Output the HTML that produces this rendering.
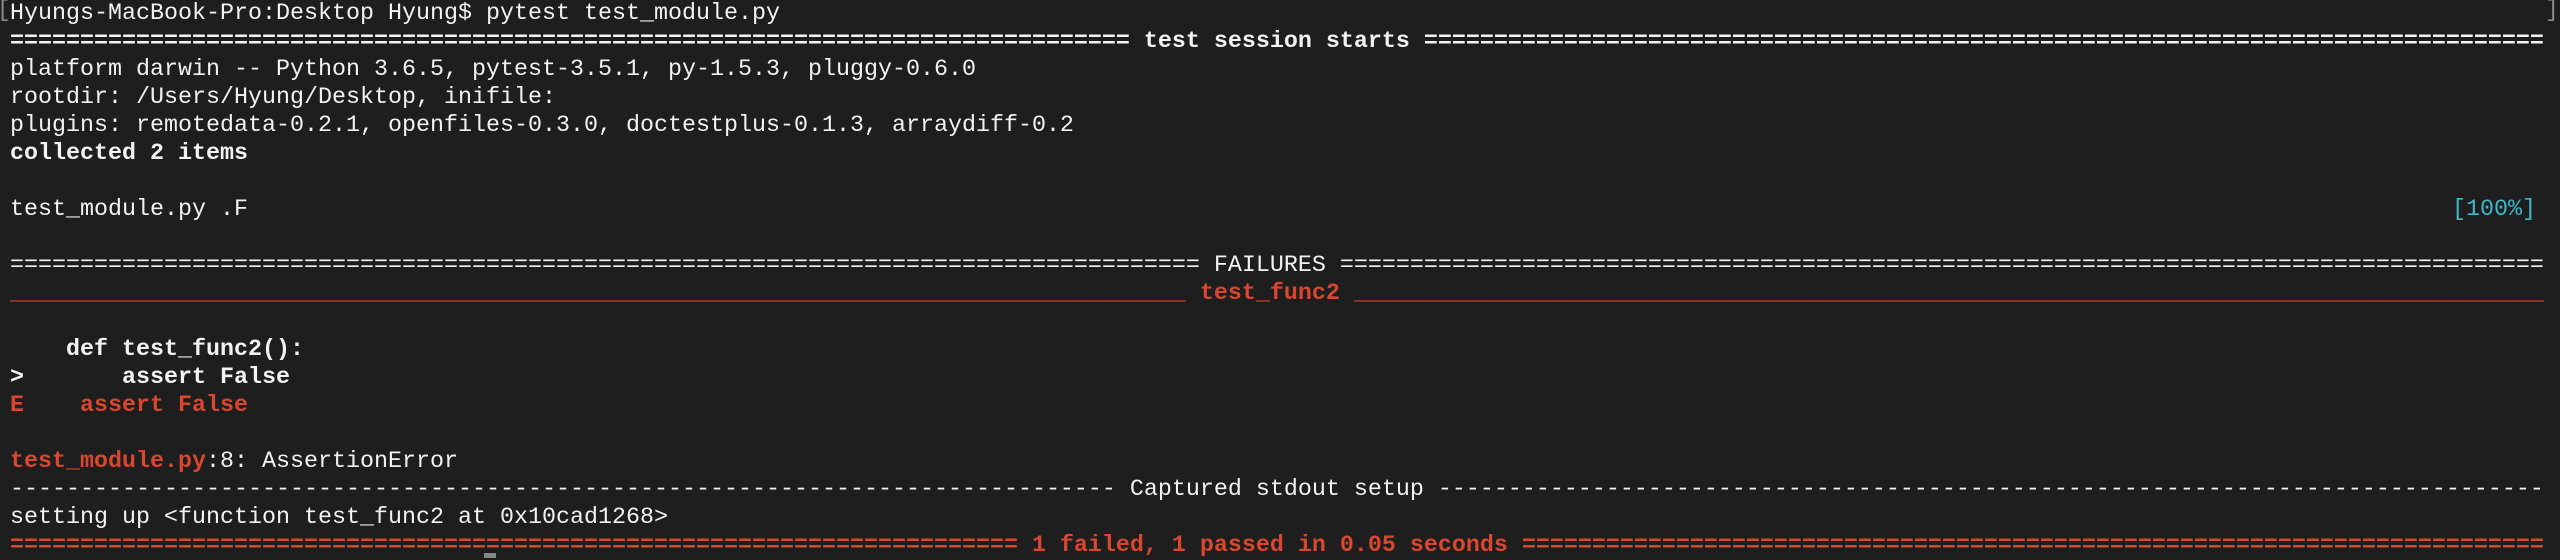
<!DOCTYPE html>
<html><head><meta charset="utf-8"><style>
html,body{margin:0;padding:0;background:#1e1e1e;width:2560px;height:558px;overflow:hidden}
.t{position:absolute;left:10px;top:0px;font-family:"Liberation Mono","DejaVu Sans Mono",monospace;font-size:23.33px;line-height:28px;color:#f2f2f2}
.t div{height:28px;white-space:pre}
b{font-weight:bold}
.r{color:#d9472f}
.c{color:#3db8c9}
.br{position:absolute;color:#8a8a8a;font-family:"Liberation Mono",monospace;font-size:23px;top:-3px}
</style></head><body>
<div class="br" style="left:-3px">[</div>
<div class="br" style="left:2545px">]</div>
<div style="position:absolute;left:484px;top:553px;width:12px;height:5px;background:#888"></div>
<div class="t"><div>Hyungs-MacBook-Pro:Desktop Hyung$ pytest test_module.py</div><div><b>================================================================================ test session starts ================================================================================</b></div><div>platform darwin -- Python 3.6.5, pytest-3.5.1, py-1.5.3, pluggy-0.6.0</div><div>rootdir: /Users/Hyung/Desktop, inifile:</div><div>plugins: remotedata-0.2.1, openfiles-0.3.0, doctestplus-0.1.3, arraydiff-0.2</div><div><b>collected 2 items</b></div><div> </div><div style="position:relative">test_module.py .F<span class="c" style="position:absolute;left:2442px;top:0">[100%]</span></div><div> </div><div>===================================================================================== FAILURES ======================================================================================</div><div class="r">____________________________________________________________________________________ <b>test_func2</b> _____________________________________________________________________________________</div><div> </div><div><b>    def test_func2():</b></div><div><b>&gt;       assert False</b></div><div class="r"><b>E    assert False</b></div><div> </div><div><b class="r">test_module.py</b>:8: AssertionError</div><div>------------------------------------------------------------------------------- Captured stdout setup -------------------------------------------------------------------------------</div><div>setting up &lt;function test_func2 at 0x10cad1268&gt;</div><div class="r"><b>======================================================================== 1 failed, 1 passed in 0.05 seconds =========================================================================</b></div></div>
</body></html>
